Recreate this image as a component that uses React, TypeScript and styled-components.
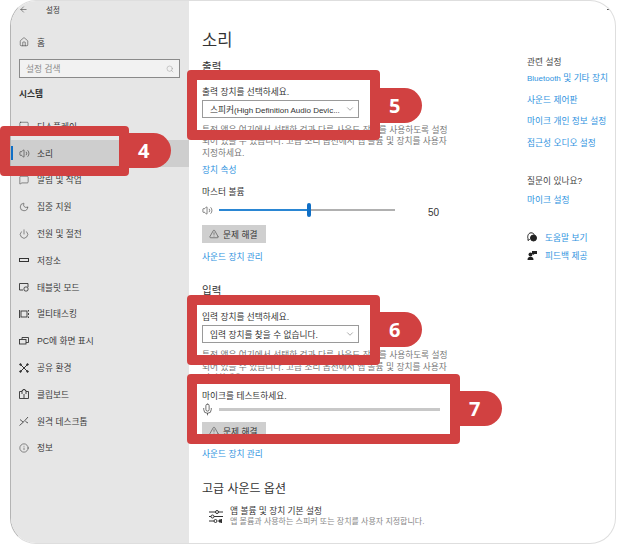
import styled, { createGlobalStyle } from "styled-components";
import { ArrowLeft, ChevronDown, Home, Info, Mic, Moon, Power, Search, TriangleAlert, Volume2, MessageSquare, Monitor } from "lucide-react";
import type { ReactNode } from "react";

const GlobalStyle = createGlobalStyle`
    html, body {
        margin: 0;
        padding: 0;
        background: #fff;
    }
    body {
        font-family: "Liberation Sans", "Noto Sans CJK KR", sans-serif;
        font-size: 8.7px;
        color: #3a3a3a;
    }
`;

const Page = styled.div`
    position: relative;
    width: 617px;
    height: 544px;
    overflow: hidden;
    background: #fff;
`;

const Window = styled.div`
    position: relative;
    box-sizing: border-box;
    display: flex;
    width: 606px;
    height: 544px;
    margin-left: 10px;
    border: 1px solid #dedede;
    border-left-color: #b4b4b4;
    border-radius: 26px;
    overflow: hidden;
    background: #fff;
`;

const Minimize = styled.span`
    position: absolute;
    top: 8px;
    right: 3px;
    width: 5px;
    height: 1px;
    background: #555;
`;

const Sidebar = styled.aside`
    flex: 0 0 178px;
    background: #e6e6e6;
`;

const TitleRow = styled.div`
    display: flex;
    align-items: center;
    gap: 18px;
    height: 14px;
    margin-top: 1px;
    padding-left: 8px;
    font-size: 7.5px;
`;

const HomeRow = styled.div`
    display: flex;
    align-items: center;
    gap: 8px;
    height: 16px;
    margin-top: 18px;
    padding-left: 8px;
`;

const SearchBox = styled.div`
    box-sizing: border-box;
    display: flex;
    align-items: center;
    justify-content: space-between;
    width: 161px;
    height: 19px;
    margin: 9px 0 0 8px;
    padding: 0 5px 0 6px;
    border: 1px solid #8a8a8a;
    background: #f2f2f2;
    color: #8a8a8a;
`;

const GroupTitle = styled.div`
    height: 14px;
    line-height: 14px;
    margin: 9px 0 0 8px;
    font-weight: 700;
    color: #333;
`;

const NavList = styled.nav`
    margin-top: 12px;
`;

const NavRow = styled.div<{ $active?: boolean }>`
    position: relative;
    display: flex;
    align-items: center;
    gap: 8px;
    height: 26.8px;
    padding-left: 8px;
    background: ${(p) => (p.$active ? "#cecece" : "transparent")};

    &::before {
        content: "";
        display: ${(p) => (p.$active ? "block" : "none")};
        position: absolute;
        left: 0;
        top: 6px;
        width: 2px;
        height: 14px;
        background: #0f6fc6;
    }
`;

const IconSlot = styled.span`
    flex: 0 0 10px;
    display: flex;
    align-items: center;
    justify-content: center;
    width: 10px;
    height: 10px;
    color: #333;

    svg {
        flex-shrink: 0;
    }
`;

const Main = styled.main`
    flex: 1;
    display: flex;
`;

const Content = styled.div`
    box-sizing: border-box;
    flex: 0 0 338px;
    padding: 29px 0 0 13px;
`;

const PageTitle = styled.h1`
    margin: 0;
    height: 20px;
    line-height: 20px;
    font-size: 16.5px;
    font-weight: 400;
    color: #333;
`;

const Heading = styled.h2<{ $mt: number; $size?: number }>`
    margin: ${(p) => p.$mt}px 0 0;
    height: 14px;
    line-height: 14px;
    font-size: ${(p) => p.$size ?? 10.5}px;
    font-weight: 400;
    color: #333;
`;

const Label = styled.div<{ $mt: number }>`
    margin-top: ${(p) => p.$mt}px;
    height: 12px;
    line-height: 14px;
    color: #333;
    white-space: nowrap;
`;

const LinkText = styled.a<{ $mt: number }>`
    display: block;
    margin-top: ${(p) => p.$mt}px;
    height: 12px;
    line-height: 12px;
    color: #2f93e0;
    white-space: nowrap;
`;

const LatinText = styled.span`
    font-size: 8px;
`;

const Select = styled.div`
    box-sizing: border-box;
    display: flex;
    align-items: center;
    justify-content: space-between;
    width: 157px;
    height: 18px;
    margin-top: 3px;
    padding: 0 3px 0 7px;
    border: 1px solid #9a9a9a;
    color: #333;
    white-space: nowrap;

    svg {
        flex-shrink: 0;
    }
`;

const Description = styled.p<{ $mt: number }>`
    margin: ${(p) => p.$mt}px 0 0;
    width: 250px;
    line-height: 11.5px;
    color: #777;
    white-space: nowrap;
`;

const SliderRow = styled.div`
    display: flex;
    align-items: center;
    height: 16px;
    margin-top: 5px;
`;

const Track = styled.div<{ $width: number }>`
    position: relative;
    width: ${(p) => p.$width}px;
    height: 2px;
    margin-left: 7px;
    background: #b0b0b0;
`;

const TrackFill = styled.div`
    height: 100%;
    background: #2a86d3;
`;

const Thumb = styled.div`
    position: absolute;
    top: -6px;
    width: 4px;
    height: 14px;
    border-radius: 2px;
    background: #0f6fc6;
`;

const VolumeValue = styled.span`
    margin: 4px 0 0 33px;
    font-size: 10px;
    color: #333;
`;

const FixButton = styled.button<{ $mt: number }>`
    display: flex;
    align-items: center;
    gap: 4px;
    box-sizing: border-box;
    width: 64px;
    height: 18px;
    margin-top: ${(p) => p.$mt}px;
    padding: 0 0 0 7px;
    border: none;
    background: #cfcfcf;
    font: inherit;
    color: #333;
`;

const MicRow = styled.div`
    display: flex;
    align-items: center;
    height: 14px;
    margin-top: 1px;
`;

const MicTrack = styled.div`
    width: 221px;
    height: 3px;
    margin-left: 7px;
    background: #c8c8c8;
`;

const OptionRow = styled.div`
    display: flex;
    align-items: center;
    gap: 7px;
    margin: 10px 0 0 7px;
`;

const OptionText = styled.div`
    line-height: 10.5px;
    color: #333;

    small {
        display: block;
        font-size: 8px;
        color: #888;
    }
`;

const Related = styled.div`
    padding: 55px 0 0 0;
`;

const RelatedTitle = styled.div<{ $mt: number }>`
    margin-top: ${(p) => p.$mt}px;
    height: 12px;
    line-height: 12px;
    color: #444;
    white-space: nowrap;
`;

const HelpRow = styled.a<{ $mt: number }>`
    display: flex;
    align-items: center;
    gap: 8px;
    height: 12px;
    margin-top: ${(p) => p.$mt}px;
    color: #2f93e0;
    white-space: nowrap;
`;

const Callout = styled.div<{ $x: number; $y: number; $w: number; $h: number }>`
    position: absolute;
    box-sizing: border-box;
    left: ${(p) => p.$x}px;
    top: ${(p) => p.$y}px;
    width: ${(p) => p.$w}px;
    height: ${(p) => p.$h}px;
    border: 10px solid #d14141;
    border-radius: 4px;
`;

const CalloutTag = styled.div<{ $top: number }>`
    position: absolute;
    box-sizing: border-box;
    left: calc(100% + 10px);
    top: ${(p) => p.$top}px;
    width: 42px;
    height: 35px;
    padding-left: 9px;
    border-radius: 0 18px 18px 0;
    background: #d14141;
    color: #fff;
    font-family: "Open Sans", sans-serif;
    font-size: 20px;
    font-weight: 700;
    line-height: 35px;
`;

const navItems: { label: string; icon: ReactNode; active?: boolean }[] = [
    { label: "디스플레이", icon: <Monitor size={10} strokeWidth={1.3} /> },
    { label: "소리", icon: <Volume2 size={11} strokeWidth={1.3} />, active: true },
    { label: "알림 및 작업", icon: <MessageSquare size={10} strokeWidth={1.3} /> },
    { label: "집중 지원", icon: <Moon size={10} strokeWidth={1.3} /> },
    { label: "전원 및 절전", icon: <Power size={10} strokeWidth={1.3} /> },
    {
        label: "저장소",
        icon: (
            <svg width="10" height="10" viewBox="0 0 10 10" fill="none" stroke="currentColor" strokeWidth="1">
                <rect x="0.5" y="3.5" width="9" height="3" />
            </svg>
        ),
    },
    {
        label: "태블릿 모드",
        icon: (
            <svg width="10" height="10" viewBox="0 0 10 10" fill="none" stroke="currentColor" strokeWidth="0.9">
                <path d="M4 8H.5V1.5h8.5V5" />
                <rect x="5" y="5" width="4" height="4" rx="1.5" />
            </svg>
        ),
    },
    {
        label: "멀티태스킹",
        icon: (
            <svg width="10" height="10" viewBox="0 0 10 10" fill="none" stroke="currentColor" strokeWidth="0.9">
                <rect x="2" y="2" width="6" height="6" />
                <path d="M.5 1v8M9.5 1v1.5M9.5 4v2M9.5 7.500V9" />
            </svg>
        ),
    },
    {
        label: "PC에 화면 표시",
        icon: (
            <svg width="10" height="10" viewBox="0 0 10 10" fill="none" stroke="currentColor" strokeWidth="0.9">
                <path d="M3 3V1.500h6.500v5H7" />
                <rect x="0.500" y="3.500" width="6.500" height="4.500" />
            </svg>
        ),
    },
    {
        label: "공유 환경",
        icon: (
            <svg width="10" height="10" viewBox="0 0 10 10" fill="currentColor" stroke="currentColor" strokeWidth="1">
                <path d="M2 2l6 6M8 2L2 8" />
                <circle cx="1.500" cy="1.500" r="0.800" />
                <circle cx="8.500" cy="1.500" r="0.800" />
                <circle cx="1.500" cy="8.500" r="0.800" />
                <circle cx="8.500" cy="8.500" r="0.800" />
            </svg>
        ),
    },
    {
        label: "클립보드",
        icon: (
            <svg width="10" height="10" viewBox="0 0 10 10" fill="none" stroke="currentColor" strokeWidth="0.9">
                <path d="M3 2.500H.5v7h9v-7H7" />
                <path d="M3 5V1.500h1V.5h2v1h1V5M5 5v4.500" />
            </svg>
        ),
    },
    {
        label: "원격 데스크톱",
        icon: (
            <svg width="10" height="10" viewBox="0 0 10 10" fill="none" stroke="currentColor" strokeWidth="0.8">
                <path d="M1 3.500l3 2.500M.5 9.500L5 5.500 9 1M6.500 5.500L9 7" />
            </svg>
        ),
    },
    { label: "정보", icon: <Info size={10} strokeWidth={1.3} /> },
];

const callouts = [
    { n: 4, x: 0, y: 126, w: 129, h: 50, tagTop: -3 },
    { n: 5, x: 187, y: 70, w: 193, h: 70, tagTop: 8 },
    { n: 6, x: 187, y: 295, w: 193, h: 70, tagTop: 7 },
    { n: 7, x: 187, y: 374, w: 273, h: 70, tagTop: 7 },
];

const descLines = (
    <>
        특정 앱은 여기에서 선택한 것과 다른 사운드 장치를 사용하도록 설정
        <br />
        되어 있을 수 있습니다. 고급 소리 옵션에서 앱 볼륨 및 장치를 사용자
        <br />
        지정하세요.
    </>
);

const App: React.FC = () => {
    return (
        <Page>
            <GlobalStyle />
            <Window>
                <Minimize />
                <Sidebar>
                    <TitleRow>
                        <ArrowLeft size={9} strokeWidth={1.5} />
                        설정
                    </TitleRow>
                    <HomeRow>
                        <IconSlot><Home size={10} strokeWidth={1.3} /></IconSlot>
                        홈
                    </HomeRow>
                    <SearchBox>
                        설정 검색
                        <Search size={8} strokeWidth={1.2} />
                    </SearchBox>
                    <GroupTitle>시스템</GroupTitle>
                    <NavList>
                        {navItems.map((item) => (
                            <NavRow key={item.label} $active={item.active}>
                                <IconSlot>{item.icon}</IconSlot>
                                {item.label}
                            </NavRow>
                        ))}
                    </NavList>
                </Sidebar>
                <Main>
                    <Content>
                        <PageTitle>소리</PageTitle>
                        <Heading $mt={9}>출력</Heading>
                        <Label $mt={12}>출력 장치를 선택하세요.</Label>
                        <Select>
                            <span>스피커<LatinText>(High Definition Audio Devic...</LatinText></span>
                            <ChevronDown size={10} strokeWidth={1} />
                        </Select>
                        <Description $mt={6.5}>{descLines}</Description>
                        <LinkText $mt={5}>장치 속성</LinkText>
                        <Label $mt={9}>마스터 볼륨</Label>
                        <SliderRow>
                            <IconSlot><Volume2 size={11} strokeWidth={1.3} /></IconSlot>
                            <Track $width={176}>
                                <TrackFill style={{ width: "50%" }} />
                                <Thumb style={{ left: "50%" }} />
                            </Track>
                            <VolumeValue>50</VolumeValue>
                        </SliderRow>
                        <FixButton $mt={7}>
                            <TriangleAlert size={10} strokeWidth={1.3} />
                            문제 해결
                        </FixButton>
                        <LinkText $mt={8}>사운드 장치 관리</LinkText>
                        <Heading $mt={20}>입력</Heading>
                        <Label $mt={13}>입력 장치를 선택하세요.</Label>
                        <Select>
                            <span>입력 장치를 찾을 수 없습니다.</span>
                            <ChevronDown size={10} strokeWidth={1} />
                        </Select>
                        <Description $mt={7}>{descLines}</Description>
                        <Label $mt={4.5}>마이크를 테스트하세요.</Label>
                        <MicRow>
                            <IconSlot><Mic size={13} strokeWidth={1.3} /></IconSlot>
                            <MicTrack />
                        </MicRow>
                        <FixButton $mt={6}>
                            <TriangleAlert size={10} strokeWidth={1.3} />
                            문제 해결
                        </FixButton>
                        <LinkText $mt={8}>사운드 장치 관리</LinkText>
                        <Heading $mt={22} $size={12}>고급 사운드 옵션</Heading>
                        <OptionRow>
                            <svg width="14" height="13" viewBox="0 0 14 13" fill="none" stroke="#333" strokeWidth="1">
                                <path d="M0 2h14M0 6.500h14M0 11h8" />
                                <circle cx="8" cy="2" r="1.500" fill="#fff" />
                                <circle cx="3.500" cy="6.500" r="1.500" fill="#fff" />
                                <circle cx="6.500" cy="11" r="1.500" fill="#fff" />
                                <path d="M10 10h1.500l1-1v4l-1-1H10z" fill="#333" />
                            </svg>
                            <OptionText>
                                앱 볼륨 및 장치 기본 설정
                                <small>앱 볼륨과 사용하는 스피커 또는 장치를 사용자 지정합니다.</small>
                            </OptionText>
                        </OptionRow>
                    </Content>
                    <Related>
                        <RelatedTitle $mt={0}>관련 설정</RelatedTitle>
                        <LinkText $mt={4}><LatinText>Bluetooth</LatinText> 및 기타 장치</LinkText>
                        <LinkText $mt={9.7}>사운드 제어판</LinkText>
                        <LinkText $mt={9.7}>마이크 개인 정보 설정</LinkText>
                        <LinkText $mt={9.7}>접근성 오디오 설정</LinkText>
                        <RelatedTitle $mt={26}>질문이 있나요?</RelatedTitle>
                        <LinkText $mt={7}>마이크 설정</LinkText>
                        <HelpRow $mt={25}>
                            <IconSlot>
                                <svg width="10" height="10" viewBox="0 0 10 10" fill="none" stroke="#222" strokeWidth="1">
                                    <path d="M3 7.500H2.500L1 8.500V6.500C.4 5.800.5 1 4 .8c1.800 0 3 .9 3.300 2" />
                                    <circle cx="6.500" cy="6" r="3" fill="#222" />
                                </svg>
                            </IconSlot>
                            도움말 보기
                        </HelpRow>
                        <HelpRow $mt={6}>
                            <IconSlot>
                                <svg width="10" height="10" viewBox="0 0 10 10" fill="#222">
                                    <circle cx="3.500" cy="4.500" r="2" />
                                    <path d="M.5 10c0-2.500 1.200-3.200 3-3.200s3 .7 3 3.200z" />
                                    <path d="M5 1h5v3H7.500L6 5V4H5z" />
                                </svg>
                            </IconSlot>
                            피드백 제공
                        </HelpRow>
                    </Related>
                </Main>
            </Window>
            {callouts.map((c) => (
                <Callout key={c.n} $x={c.x} $y={c.y} $w={c.w} $h={c.h}>
                    <CalloutTag $top={c.tagTop}>{c.n}</CalloutTag>
                </Callout>
            ))}
        </Page>
    );
};

export default App;
